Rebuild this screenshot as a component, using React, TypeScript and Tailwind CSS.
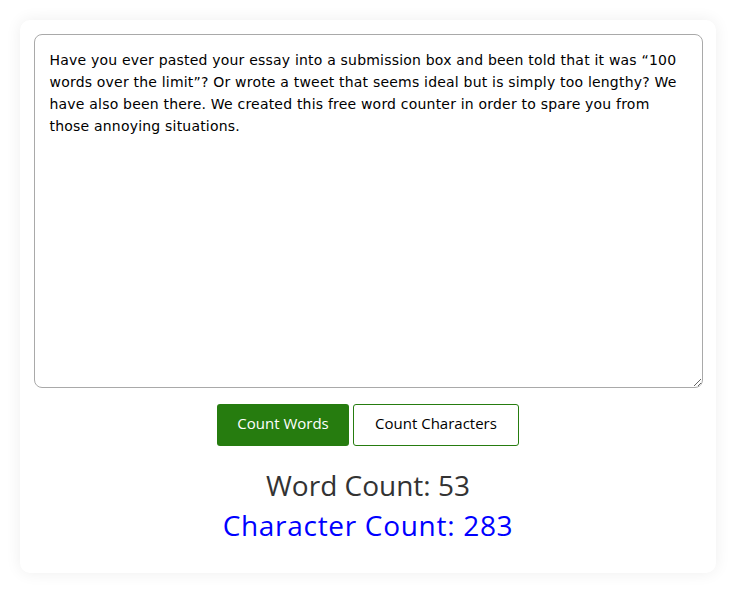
import { useState } from "react"

const initial =
  "Have you ever pasted your essay into a submission box and been told that it was \u201c100 words over the limit\u201d? Or wrote a tweet that seems ideal but is simply too lengthy? We have also been there. We created this free word counter in order to spare you from those annoying situations."

export default function App() {
  const [text, setText] = useState(initial)
  const [words, setWords] = useState(53)
  const [chars, setChars] = useState(283)

  const countWords = () => setWords(text.trim() ? text.trim().split(/\s+/).length : 0)
  const countChars = () => setChars(text.length)

  return (
    <div className="min-h-screen bg-white py-5" style={{ fontFamily: '"Open Sans", "Liberation Sans", sans-serif' }}>
      <div className="mx-auto w-[696px] rounded-[10px] bg-white pt-[14px] pr-[13px] pb-7 pl-[14px] shadow-[0_0_16px_rgba(0,0,0,0.07)]">
        <textarea
          value={text}
          onChange={(e) => setText(e.target.value)}
          style={{ fontFamily: '"DejaVu Sans", sans-serif' }}
          className="block h-[354px] w-full rounded-lg border border-[#a9a9a9] px-[15px] py-[14px] text-[14px] leading-[22px] tracking-[0.2px] text-black focus:outline-none"
        />
        <div className="mt-4 flex justify-center gap-1">
          <button
            onClick={countWords}
            className="h-[42px] w-[132px] rounded-[3px] bg-[#267c0f] pb-[3px] text-[15px] text-white"
          >
            Count Words
          </button>
          <button
            onClick={countChars}
            className="h-[42px] w-[166px] rounded-[3px] border border-[#267c0f] bg-white pb-[3px] text-[15px] text-black"
          >
            Count Characters
          </button>
        </div>
        <div className="mt-[19px] text-center text-[28px] leading-[40px]">
          <p className="text-[#333333]">Word Count: {words}</p>
          <p className="tracking-[0.7px] text-[#0000ff]">Character Count: {chars}</p>
        </div>
      </div>
    </div>
  )
}
